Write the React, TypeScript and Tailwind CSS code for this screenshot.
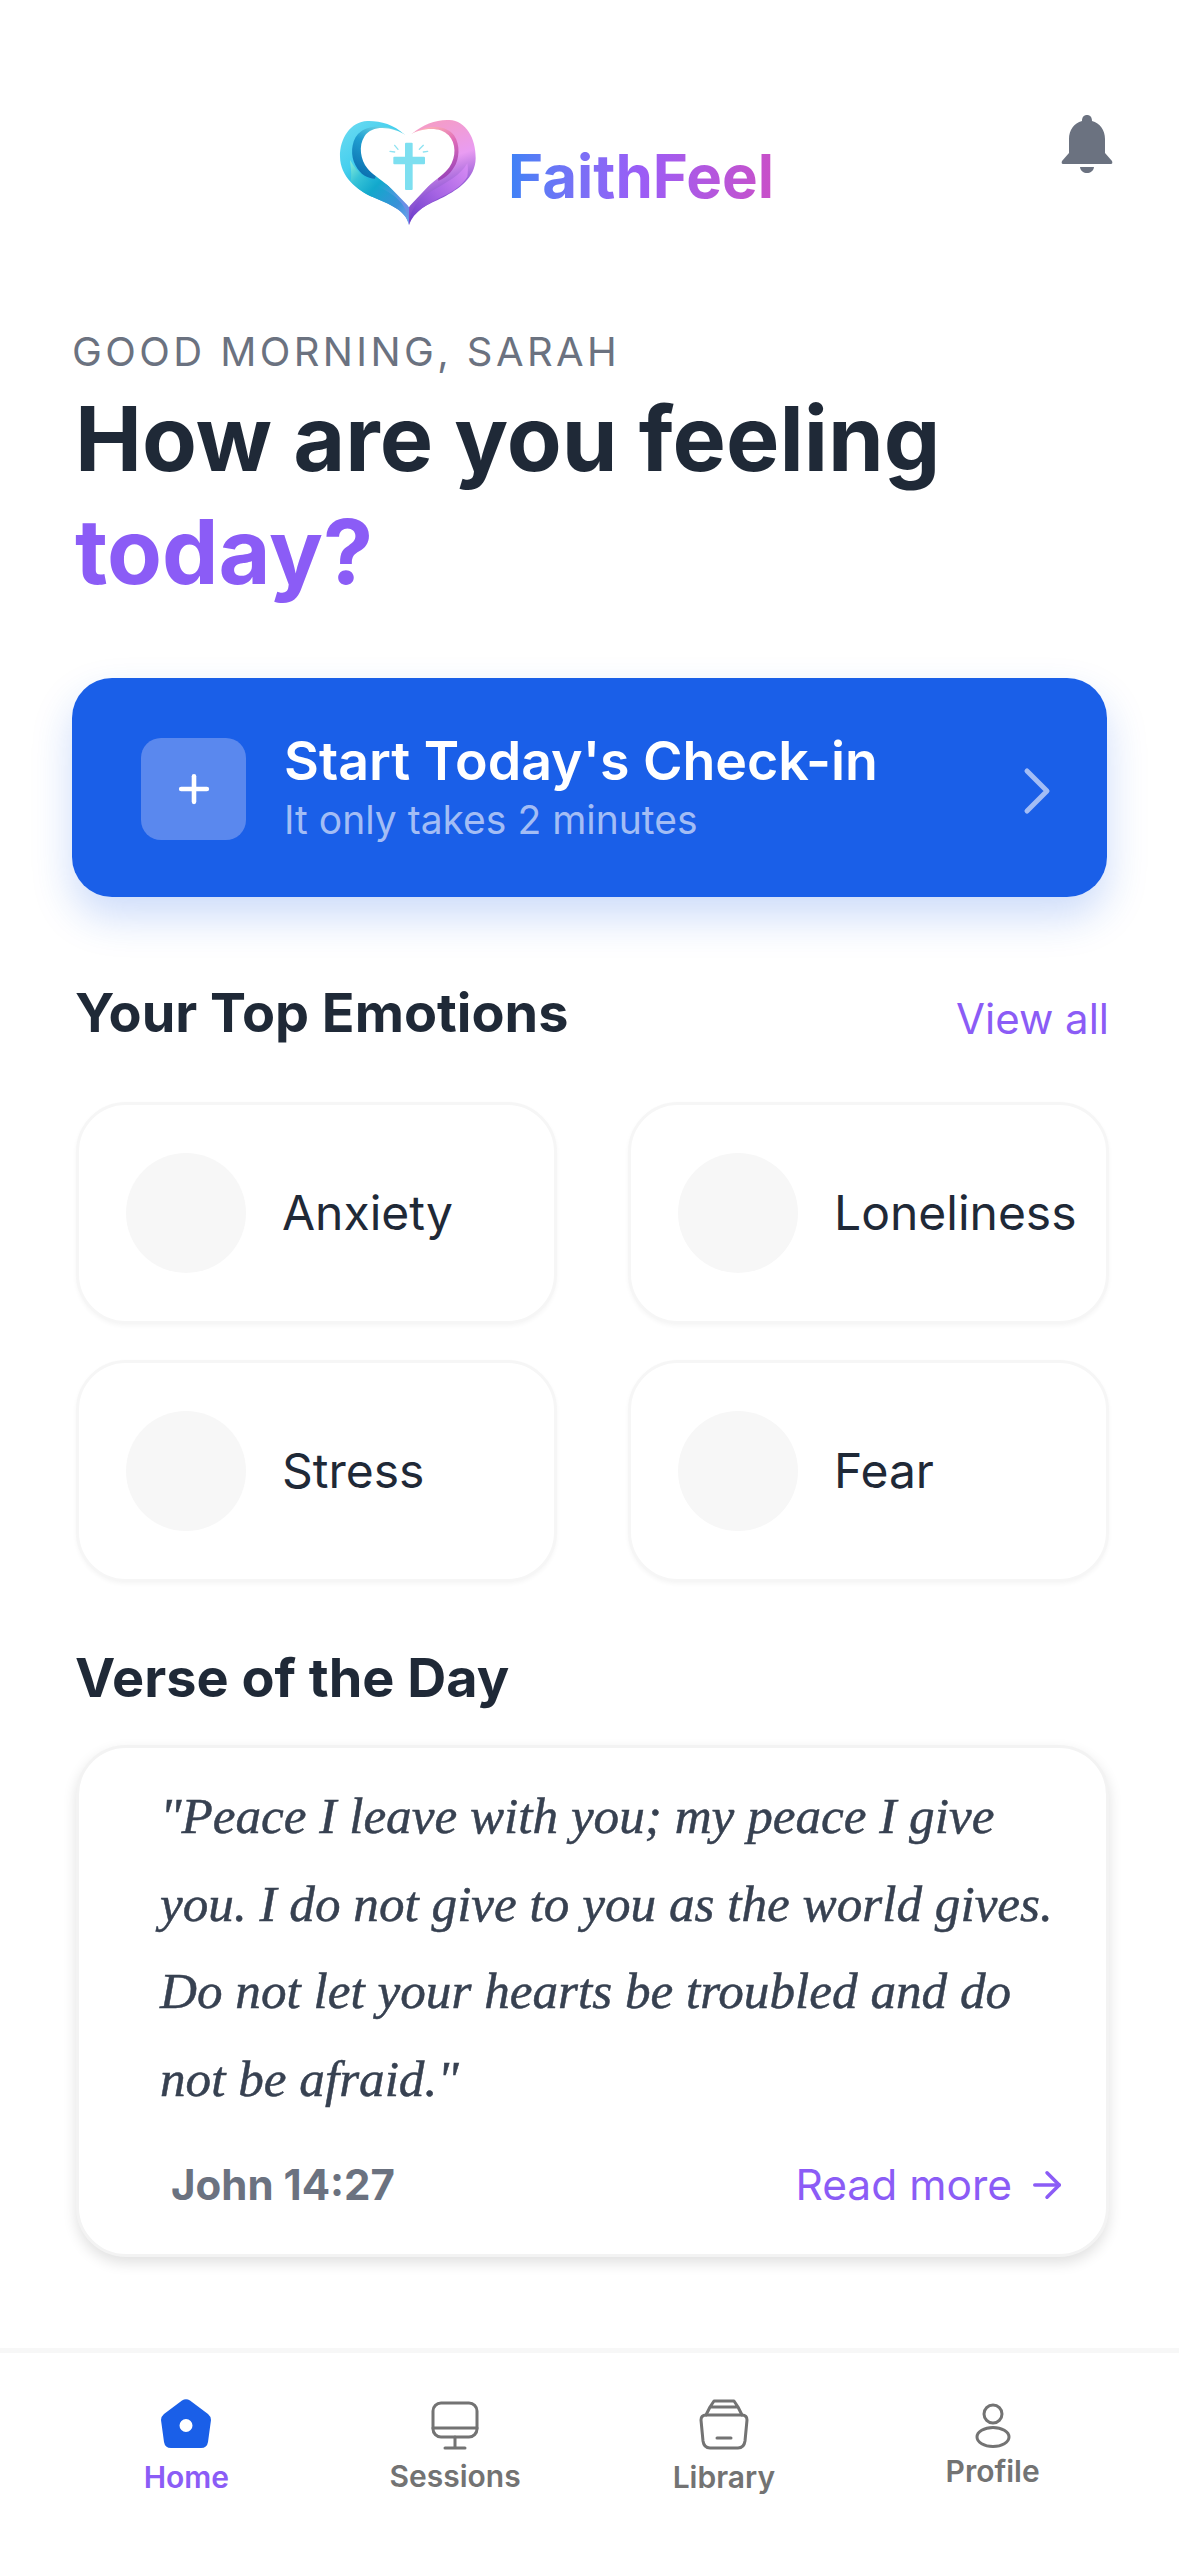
import { ArrowRight, ChevronRight, Plus } from 'lucide-react';

const emotions = ['Anxiety', 'Loneliness', 'Stress', 'Fear'];

function HeartLogo() {
    return (
        <svg width="160" height="125" viewBox="0 0 480 375" className="shrink-0">
            <defs>
                <linearGradient id="leftBand" x1="0" y1="0" x2="0.55" y2="1">
                    <stop offset="0" stopColor="#6fdcf2" />
                    <stop offset="0.4" stopColor="#45cfee" />
                    <stop offset="0.7" stopColor="#12a8cc" />
                    <stop offset="1" stopColor="#6c8fe6" />
                </linearGradient>
                <linearGradient id="leftInner" x1="0.8" y1="0" x2="0.3" y2="1">
                    <stop offset="0" stopColor="#7fe0e8" />
                    <stop offset="0.45" stopColor="#1f9ed0" />
                    <stop offset="1" stopColor="#0b6fb0" />
                </linearGradient>
                <linearGradient id="leftTail" x1="0" y1="0" x2="1" y2="1">
                    <stop offset="0" stopColor="#8ff0d8" />
                    <stop offset="0.2" stopColor="#38c4d8" />
                    <stop offset="0.42" stopColor="#12a8cc" />
                    <stop offset="0.75" stopColor="#3a90d8" />
                    <stop offset="1" stopColor="#7aa8f0" />
                </linearGradient>
                <linearGradient id="rightBand" x1="0.3" y1="0" x2="0.5" y2="1">
                    <stop offset="0" stopColor="#f59cc4" />
                    <stop offset="0.4" stopColor="#e99cf2" />
                    <stop offset="0.7" stopColor="#8f58d4" />
                    <stop offset="1" stopColor="#6a36c4" />
                </linearGradient>
                <linearGradient id="rightInner" x1="0.2" y1="0" x2="0.6" y2="1">
                    <stop offset="0" stopColor="#ffb8b4" />
                    <stop offset="0.45" stopColor="#e06cb8" />
                    <stop offset="1" stopColor="#9a44b8" />
                </linearGradient>
                <linearGradient id="rightTail" x1="1" y1="0" x2="0" y2="1">
                    <stop offset="0" stopColor="#d88cf4" />
                    <stop offset="0.5" stopColor="#a765e4" />
                    <stop offset="1" stopColor="#6a3cc8" />
                </linearGradient>
            </defs>
            {/* left side */}
            <path d="M224 74 C190 42 150 32 112 33 C62 35 29 85 30 140 C31 200 80 240 130 262 C175 282 228 300 237 345 L237 290 L120 170 Z" fill="url(#leftBand)" />
            <path d="M224 74 C185 46 118 38 84 72 C62 96 62 140 76 165 C92 195 112 205 135 206 L150 150 Z" fill="url(#leftInner)" />
            <path d="M60 150 C85 195 120 215 160 238 C205 262 235 290 237 345 C228 300 175 282 130 262 C105 251 80 235 62 212 C66 195 62 170 60 150 Z" fill="url(#leftTail)" />
            {/* right side */}
            <path d="M245 72 C280 42 320 28 358 30 C408 32 438 85 437 145 C436 205 385 238 340 262 C295 284 247 300 237 345 L237 290 L350 170 Z" fill="url(#rightBand)" />
            <path d="M245 72 C285 46 345 40 372 76 C392 104 388 150 372 172 C358 195 340 208 325 212 L320 150 Z" fill="url(#rightInner)" />
            <path d="M412 160 C392 195 350 218 310 240 C265 266 240 295 237 345 C250 305 295 280 340 258 C370 243 395 228 412 200 C414 185 414 172 412 160 Z" fill="url(#rightTail)" />
            {/* white centre */}
            <path d="M232 78 C190 50 128 42 104 78 C84 108 92 150 112 175 C135 205 215 245 237 292 C258 245 335 205 358 172 C380 140 378 100 356 76 C330 48 275 52 232 78 Z" fill="#ffffff" />
            {/* cross */}
            <rect x="225" y="98" width="23" height="142" rx="3" fill="#7ddff0" />
            <rect x="190" y="140" width="95" height="23" rx="3" fill="#7ddff0" />
            <path d="M194 106 L204 118 M180 124 L194 126 M280 106 L268 118 M293 124 L280 126" stroke="#8fe3f2" strokeWidth="4" strokeLinecap="round" />
        </svg>
    );
}

function BellIcon() {
    return (
        <svg width="54" height="64" viewBox="0 0 54 64" className="shrink-0">
            <path
                d="M27 2 C30 2 32 4 32 8 C40 10 45 17 45 26 L45 40 L52 48 Q53 51 51 51 L3 51 Q1 51 2 48 L9 40 L9 26 C9 17 14 10 22 8 C22 4 24 2 27 2 Z M20 54 L34 54 C33 62 21 62 20 54 Z"
                fill="#6b7280"
            />
        </svg>
    );
}

function HomeIcon() {
    return (
        <svg width="56" height="52" viewBox="0 0 56 52">
            <path
                fillRule="evenodd"
                d="M24 2.5 Q28 0 32 2.5 L50 16 Q53 18.500 53 22 L50 44 Q49 50 43 50 L13 50 Q7 50 6 44 L3 22 Q3 18.500 6 16 Z M28 21 A6.500 6.500 0 1 0 28 34 A6.500 6.500 0 1 0 28 21 Z"
                fill="#1a5fe8"
            />
        </svg>
    );
}

function SessionsIcon() {
    return (
        <svg width="56" height="52" viewBox="0 0 56 52" fill="none" stroke="#737373" strokeWidth="3" strokeLinecap="round" strokeLinejoin="round">
            <rect x="6" y="5" width="44" height="34" rx="8" />
            <path d="M6 30 L50 30 M28 39 L28 49 M18 50 L38 50" />
        </svg>
    );
}

function LibraryIcon() {
    return (
        <svg width="56" height="52" viewBox="0 0 56 52" fill="none" stroke="#737373" strokeWidth="3" strokeLinecap="round" strokeLinejoin="round">
            <path d="M5 22 Q5 17 10 17 L46 17 Q51 17 51 22 L49 43 Q48 50 42 50 L14 50 Q8 50 7 43 Z" />
            <path d="M10 17 L14 9 L42 9 L46 17 M14 9 L18 3 L38 3 L42 9 M21 40 L35 40" />
        </svg>
    );
}

function ProfileIcon() {
    return (
        <svg width="56" height="52" viewBox="0 0 56 52" fill="none" stroke="#737373" strokeWidth="3">
            <circle cx="28" cy="16" r="9" />
            <ellipse cx="28" cy="39" rx="16" ry="9.500" />
        </svg>
    );
}

export default function App() {
    return (
        <div className="flex min-h-[2556px] w-[1179px] flex-col bg-white font-['Inter',sans-serif]">
            <main className="flex-1 px-[72px]">
                {/* Header */}
                <header className="flex items-start pt-[110px]">
                    <div className="ml-[258px] flex items-center">
                        <HeartLogo />
                        <span className="ml-[18px] translate-y-[3px] bg-gradient-to-r from-[#3b82f6] via-[#9b5cf6] to-[#c94fc8] bg-clip-text text-[60px] leading-none font-bold text-transparent">
                            FaithFeel
                        </span>
                    </div>
                    <div className="mt-[3px] -mr-[7px] ml-auto">
                        <BellIcon />
                    </div>
                </header>

                {/* Greeting */}
                <p className="mt-[93px] text-[40px] leading-[48px] tracking-[3.400px] text-[#6b7280]">GOOD MORNING, SARAH</p>
                <h1 className="mt-[6px] pl-[3px] text-[89.700px] leading-[113px] font-bold text-[#1f2937]">
                    How are you feeling
                    <br />
                    <span className="text-[#8b5cf6]">today?</span>
                </h1>

                {/* Check-in */}
                <button className="mt-[70px] flex h-[219px] w-[1035px] items-center rounded-[40px] bg-[#1a5fe8] pr-[30px] pl-[69px] text-left shadow-[0_20px_40px_rgba(26,95,232,0.22)]">
                    <span className="mt-[3px] flex h-[102px] w-[105px] items-center justify-center rounded-[20px] bg-[#5a88ee]">
                        <Plus size={44} color="#ffffff" strokeWidth={2.5} />
                    </span>
                    <span className="mb-[4px] ml-[38px] flex flex-col">
                        <span className="text-[53.700px] leading-[66px] font-semibold text-white">Start Today's Check-in</span>
                        <span className="mt-[3px] text-[39px] leading-[46px] text-[#a3bdf5]">It only takes 2 minutes</span>
                    </span>
                    <ChevronRight size={80} color="#a3bdf5" strokeWidth={1.5} className="mt-[6px] ml-auto" />
                </button>

                {/* Top emotions */}
                <div className="mt-[85px] flex items-center justify-between pl-[3px]">
                    <h2 className="text-[54px] leading-[62px] font-bold text-[#1f2937]">Your Top Emotions</h2>
                    <span className="mt-[12px] -mr-[2px] text-[42px] leading-[50px] text-[#8b5cf6]">View all</span>
                </div>
                <div className="mt-[58px] ml-[4px] grid w-[1033px] grid-cols-2 gap-x-[71px] gap-y-[36px]">
                    {emotions.map((name) => (
                        <div key={name} className="flex h-[222px] items-center rounded-[50px] border-[3px] border-[#f6f6f6] bg-white pl-[47px] shadow-[0_2px_4px_rgba(0,0,0,0.04)]">
                            <span className="h-[120px] w-[120px] shrink-0 rounded-full bg-[#f7f7f7]" />
                            <span className="ml-[36px] text-[48px] leading-[60px] font-[430] text-[#1f2937]">{name}</span>
                        </div>
                    ))}
                </div>

                {/* Verse of the day */}
                <h2 className="mt-[65px] pl-[3px] text-[54px] leading-[62px] font-bold text-[#1f2937]">Verse of the Day</h2>
                <div className="mt-[36px] ml-[4px] w-[1033px] rounded-[50px] border-[3px] border-[#f3f3f3] bg-white pt-[24px] pr-[47px] pb-[42px] pl-[81px] shadow-[0_6px_14px_rgba(0,0,0,0.12)]">
                    <p className="font-['Liberation_Serif',serif] text-[51.200px] leading-[87.500px] text-[#374151] italic [-webkit-text-stroke:0.5px_#374151]">
                        "Peace I leave with you; my peace I give you. I do not give to you as the world gives. Do not let your hearts be troubled and do not be afraid."
                    </p>
                    <div className="mt-[36px] flex items-center justify-between pl-[11px]">
                        <span className="text-[42px] leading-[54px] font-bold text-[#6b7280]">John 14:27</span>
                        <span className="-mr-[9px] flex items-center gap-[14px] text-[42.500px] leading-[54px] text-[#8b5cf6]">
                            Read more
                            <ArrowRight size={42} strokeWidth={2} />
                        </span>
                    </div>
                </div>
            </main>

            {/* Bottom nav */}
            <nav className="grid h-[208px] grid-cols-4 border-t-[5px] border-[#f7f7f7] px-[52px] pt-[45px] text-[30px] leading-[36px] font-semibold text-[#737373]">
                <div className="flex flex-col items-center">
                    <HomeIcon />
                    <span className="mt-[9px] text-[#8b5cf6]">Home</span>
                </div>
                <div className="flex flex-col items-center">
                    <SessionsIcon />
                    <span className="mt-[8px]">Sessions</span>
                </div>
                <div className="flex flex-col items-center">
                    <LibraryIcon />
                    <span className="mt-[9px]">Library</span>
                </div>
                <div className="flex flex-col items-center">
                    <ProfileIcon />
                    <span className="mt-[3px]">Profile</span>
                </div>
            </nav>
        </div>
    );
}
